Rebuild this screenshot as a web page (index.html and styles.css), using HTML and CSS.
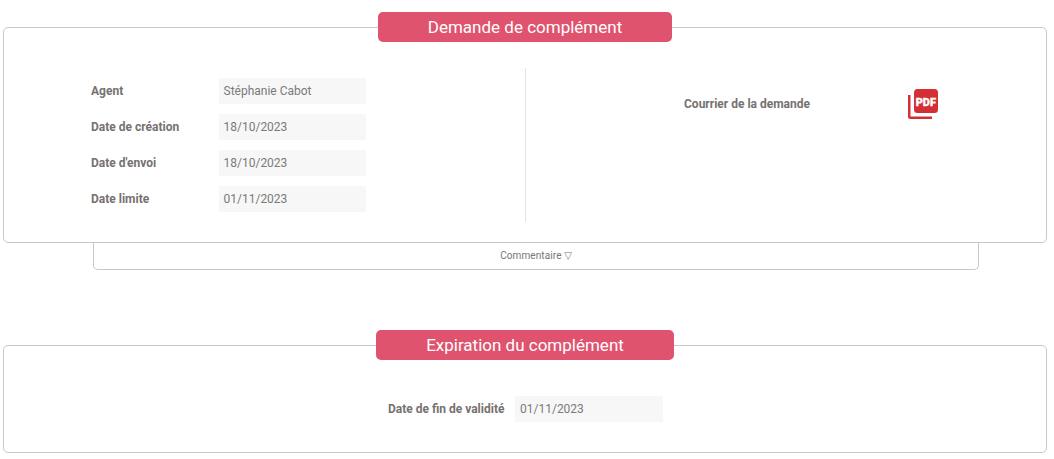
FILE: index.html
```html
<!DOCTYPE html>
<html lang="fr">
<head>
<meta charset="utf-8">
<title>Demande de complément</title>
<link rel="stylesheet" href="styles.css">
</head>
<body>
<section class="panel panel-request">
  <h2 class="panel-title title-request">Demande de complément</h2>
  <div class="panel-body">
    <div class="col-left">
      <div class="field"><span class="label">Agent</span><span class="value">Stéphanie Cabot</span></div>
      <div class="field"><span class="label">Date de création</span><span class="value">18/10/2023</span></div>
      <div class="field"><span class="label">Date d'envoi</span><span class="value">18/10/2023</span></div>
      <div class="field"><span class="label">Date limite</span><span class="value">01/11/2023</span></div>
    </div>
    <div class="col-right">
      <span class="label doc-label">Courrier de la demande</span>
      <svg class="pdf-icon" viewBox="0 0 30 30" width="30" height="30" aria-label="PDF">
        <path d="M0 6h2.500v21.500H24V30H2.500A2.500 2.500 0 0 1 0 27.500Z" fill="#d32f35"/>
        <rect x="6" y="0" width="24" height="24" rx="3.500" fill="#d32f35"/>
        <text x="17.800" y="16.500" class="pdf-text" text-anchor="middle">PDF</text>
      </svg>
    </div>
  </div>
</section>
<div class="comment-toggle">Commentaire <span class="caret">▽</span></div>
<section class="panel panel-expiry">
  <h2 class="panel-title title-expiry">Expiration du complément</h2>
  <div class="expiry-body">
    <span class="label">Date de fin de validité</span><span class="value value-wide">01/11/2023</span>
  </div>
</section>
</body>
</html>
```
FILE: styles.css
```css
* { box-sizing: border-box; }
html, body { margin: 0; padding: 0; background: #fff; }
body {
  font-family: Roboto, "Liberation Sans", sans-serif;
  font-size: 12px;
  color: #757575;
  padding: 12px 7px 0 3px;
}
.panel {
  border: 1px solid #c8c8c8;
  border-radius: 5px;
  background: #fff;
}
.panel-request { margin-top: 15px; height: 216px; }
.panel-expiry { margin-top: 75px; height: 108px; }
.panel-title {
  display: block;
  margin: -16px auto 0;
  height: 30px;
  line-height: 30px;
  background: #df536e;
  color: #fff;
  font-size: 17px;
  font-weight: 400;
  text-align: center;
  border-radius: 5px;
}
.title-request { width: 294px; }
.title-expiry { width: 298px; }
.panel-body {
  display: flex;
  margin-top: 26px;
}
.col-left {
  width: 522px;
  height: 154px;
  padding: 10px 0 0 87px;
  border-right: 1px solid #e4e4e4;
}
.field {
  display: flex;
  align-items: center;
  height: 26px;
  margin-bottom: 10px;
}
.field .label { width: 128px; }
.label {
  font-weight: 700;
  color: #757171;
}
.value {
  display: block;
  width: 147px;
  height: 26px;
  line-height: 26px;
  padding-left: 4.500px;
  background: #f7f7f7;
  color: #7a7a7a;
}
.value-wide { width: 148px; padding-left: 5px; }
.col-right {
  display: flex;
  align-items: flex-start;
  padding: 21px 0 0 158px;
}
.doc-label { width: 224px; line-height: 31px; }
.pdf-icon { display: block; }
.pdf-text {
  font-family: Roboto, "Liberation Sans", sans-serif;
  font-size: 11px;
  font-weight: 900;
  fill: #fff;
  stroke: #fff;
  stroke-width: 0.300px;
}
.comment-toggle {
  width: 886px;
  height: 27px;
  margin: 0 0 0 90px;
  border: 1px solid #c8c8c8;
  border-top: 0;
  border-radius: 0 0 5px 5px;
  text-align: center;
  font-size: 10px;
  line-height: 26px;
  letter-spacing: 0.010em;
  color: #757575;
}
.caret { font-family: "DejaVu Sans", sans-serif; font-size: 10px; letter-spacing: 0; }
.expiry-body {
  display: flex;
  align-items: center;
  margin-top: 36px;
  padding-left: 384px;
}
.expiry-body .label { width: 127px; }
```
